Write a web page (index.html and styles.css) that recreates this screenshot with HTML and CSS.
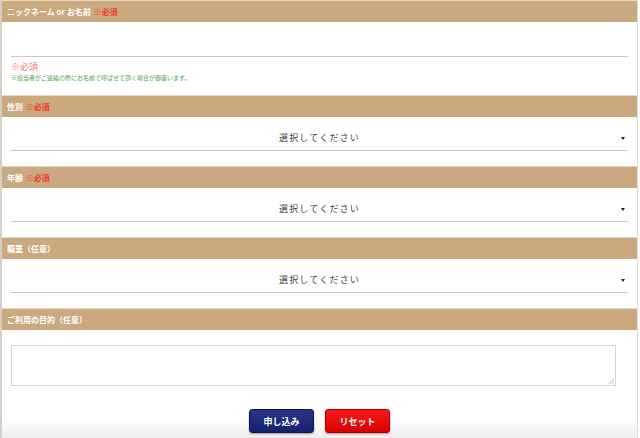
FILE: index.html
```html
<!DOCTYPE html>
<html lang="ja">
<head>
    <meta charset="UTF-8">
    <title>お問い合わせ</title>
    <link rel="stylesheet" href="styles.css">
</head>
<body>
    <div class="formulario">
        <div class="titulo">ニックネーム or お名前 <span class="req">※必須</span></div>
        <div class="campo campo-nombre">
            <div class="linea"></div>
            <div class="aviso">※必須</div>
            <div class="nota">※担当者がご連絡の際にお名前で呼ばせて頂く場合が御座います。</div>
        </div>

        <div class="titulo">性別 <span class="req">※必須</span></div>
        <div class="campo">
            <div class="selector">選択してください<span class="flecha"></span></div>
        </div>

        <div class="titulo">年齢 <span class="req">※必須</span></div>
        <div class="campo">
            <div class="selector">選択してください<span class="flecha"></span></div>
        </div>

        <div class="titulo">職業（任意）</div>
        <div class="campo">
            <div class="selector">選択してください<span class="flecha"></span></div>
        </div>

        <div class="titulo">ご利用の目的（任意）</div>
        <div class="campo campo-texto">
            <div class="texto"><span class="asa"></span></div>
        </div>

        <div class="botones">
            <button class="boton boton-enviar">申し込み</button>
            <button class="boton boton-reset">リセット</button>
        </div>
    </div>
</body>
</html>
```

FILE: styles.css
```css
body {
    margin: 0;
    background: #fff;
    font-family: "Noto Sans CJK JP", "Noto Sans", sans-serif;
}

.formulario {
    width: 635px;
    height: 438px;
    border-left: 2px solid #d6cec4;
    border-right: 1px solid #dcdcdc;
    overflow: hidden;
}

.titulo {
    height: 22px;
    line-height: 22px;
    padding-left: 5px;
    background-color: #caa97f;
    border-top: 1px solid #e6d8c4;
    box-sizing: border-box;
    color: #fff;
    font-size: 8px;
    font-weight: 700;
}

.req {
    color: #f2352b;
    margin-left: 1px;
}

.campo {
    height: 49px;
    padding: 0 9px;
    box-sizing: border-box;
}

.campo-nombre {
    height: 73px;
    padding-top: 34px;
}

.linea {
    height: 0;
    border-bottom: 1px solid #c8c8c8;
}

.aviso {
    margin-top: 4px;
    font-size: 9px;
    line-height: 12px;
    color: #f47a7a;
}

.nota {
    font-size: 6px;
    line-height: 10px;
    color: #4fa04f;
}

.selector {
    position: relative;
    height: 34px;
    padding-top: 15px;
    box-sizing: border-box;
    border-bottom: 1px solid #c8c8c8;
    text-align: center;
    font-size: 9px;
    line-height: 12px;
    letter-spacing: 1.2px;
    color: #444;
}

.flecha {
    position: absolute;
    right: 3px;
    top: 20px;
    border-left: 2.5px solid transparent;
    border-right: 2.5px solid transparent;
    border-top: 3px solid #222;
}

.campo-texto {
    height: 79px;
    padding-top: 15px;
}

.texto {
    position: relative;
    width: 605px;
    height: 41px;
    border: 1px solid #d8d4d0;
    box-sizing: border-box;
    background: #fff;
}

.asa {
    position: absolute;
    right: 1px;
    bottom: 1px;
    width: 5px;
    height: 5px;
    background: linear-gradient(135deg, transparent 45%, #bbb 45%, #bbb 55%, transparent 55%, transparent 75%, #bbb 75%, #bbb 85%, transparent 85%);
}

.botones {
    height: 30px;
    display: flex;
    justify-content: center;
    align-items: flex-start;
    gap: 11px;
    background: linear-gradient(#fff 0, #fff 8px, #ededed 30px);
}

.boton {
    width: 65px;
    height: 24px;
    border-radius: 3px;
    color: #fff;
    font-family: "Noto Sans CJK JP", sans-serif;
    font-size: 9px;
    font-weight: 700;
    cursor: pointer;
    box-shadow: 0 1px 2px rgba(0, 0, 0, 0.35);
}

.boton-enviar {
    border: 1px solid #0e1650;
    background: linear-gradient(#24358a, #15226a);
}

.boton-reset {
    border: 1px solid #a00;
    background: linear-gradient(#ff1a1a, #d40000);
}
```
